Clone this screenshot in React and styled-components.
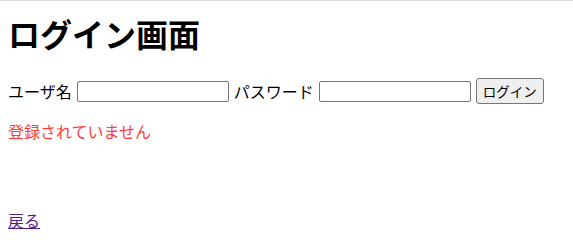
import React, { useState } from "react";
import styled, { createGlobalStyle } from "styled-components";

const Global = createGlobalStyle`
  html, body {
    margin: 0;
    padding: 0;
    background: #fff;
  }
  body {
    border-top: 1px solid #dedede;
    font-family: "Noto Sans CJK JP", "Noto Sans", sans-serif;
    font-size: 16px;
    color: #000;
  }
`;

const Page = styled.div`
  padding: 0 8px;
`;

const Title = styled.h1`
  margin: 12px 0 0;
  font-size: 32px;
  line-height: 40px;
  font-weight: 700;
`;

const Form = styled.form`
  display: flex;
  align-items: center;
  gap: 5px;
  margin-top: 25px;
  height: 26px;
`;

const Label = styled.label`
  line-height: 20px;
`;

const Input = styled.input`
  box-sizing: border-box;
  width: 152px;
  height: 21px;
  border: 1px solid #767676;
  border-radius: 2px;
  padding: 1px 2px;
  font-size: 13px;
`;

const Button = styled.button`
  box-sizing: border-box;
  width: 68px;
  height: 26px;
  padding: 0;
  border: 1px solid #767676;
  border-radius: 3px;
  background: #efefef;
  font-family: inherit;
  font-size: 13.5px;
  color: #000;
`;

const Error = styled.p`
  margin: 17px 0 0;
  color: #ff3b3b;
  line-height: 20px;
`;

const Back = styled.a`
  display: inline-block;
  margin-top: 69px;
  color: #551a8b;
  text-decoration: underline;
  line-height: 20px;
`;

export default function App() {
  const [user, setUser] = useState("");
  const [pass, setPass] = useState("");

  return (
    <Page>
      <Global />
      <Title>ログイン画面</Title>
      <Form onSubmit={(e) => e.preventDefault()}>
        <Label>ユーザ名</Label>
        <Input value={user} onChange={(e) => setUser(e.target.value)} />
        <Label>パスワード</Label>
        <Input
          type="password"
          value={pass}
          onChange={(e) => setPass(e.target.value)}
        />
        <Button type="submit">ログイン</Button>
      </Form>
      <Error>登録されていません</Error>
      <div>
        <Back href="#">戻る</Back>
      </div>
    </Page>
  );
}
